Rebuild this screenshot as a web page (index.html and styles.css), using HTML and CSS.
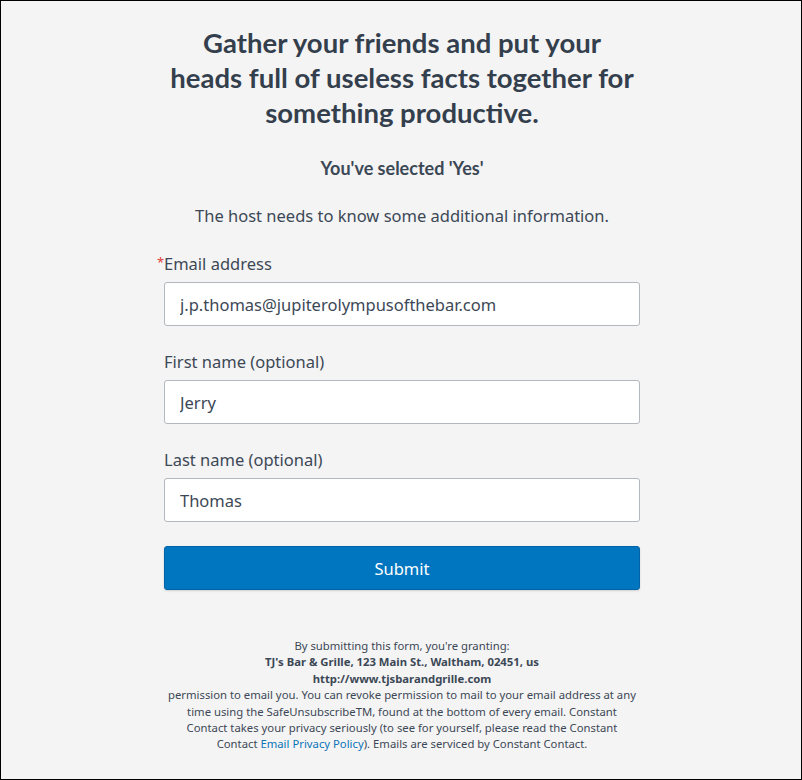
FILE: index.html
```html
<!DOCTYPE html>
<html lang="en">
<head>
    <meta charset="UTF-8">
    <meta name="viewport" content="width=device-width, initial-scale=1.0">
    <title>Event RSVP</title>
    <link rel="stylesheet" href="styles.css">
</head>
<body>
    <div class="page">
        <div class="container">
            <h1>Gather your friends and put your heads full of useless facts together for something productive.</h1>
            <p class="selected">You've selected 'Yes'</p>
            <p class="intro">The host needs to know some additional information.</p>

            <form class="rsvp-form">
                <div class="field">
                    <label for="email"><span class="required">*</span>Email address</label>
                    <input type="text" id="email" value="j.p.thomas@jupiterolympusofthebar.com">
                </div>
                <div class="field">
                    <label for="firstName">First name (optional)</label>
                    <input type="text" id="firstName" value="Jerry">
                </div>
                <div class="field">
                    <label for="lastName">Last name (optional)</label>
                    <input type="text" id="lastName" value="Thomas">
                </div>
                <button type="button" class="submit-btn">Submit</button>
            </form>

            <div class="legal">
                By submitting this form, you're granting:<br>
                <strong>TJ's Bar &amp; Grille, 123 Main St., Waltham, 02451, us</strong><br>
                <strong>http://www.tjsbarandgrille.com</strong><br>
                permission to email you. You can revoke permission to mail to your email address at any time using the SafeUnsubscribeTM, found at the bottom of every email. Constant Contact takes your privacy seriously (to see for yourself, please read the Constant Contact <a href="#">Email Privacy Policy</a>). Emails are serviced by Constant Contact.
            </div>
        </div>
    </div>
</body>
</html>
```

FILE: styles.css
```css
/* General Styles */
html, body {
    margin: 0;
    padding: 0;
}
body {
    font-family: "Noto Sans", "Open Sans", sans-serif;
    background-color: #f4f4f4;
    color: #3c4856;
}
.page {
    box-sizing: border-box;
    height: 780px;
    border: 1px solid #000;
    padding-left: 2px;
    overflow: hidden;
}
.container {
    width: 476px;
    margin: 0 auto;
    padding-top: 24px;
    text-align: center;
}
h1 {
    font-family: Lato, sans-serif;
    font-weight: 700;
    font-size: 27.5px;
    line-height: 35px;
    margin: 0;
    padding: 0 4px;
    color: #343f4d;
}
.selected {
    font-family: Lato, sans-serif;
    font-weight: 700;
    font-size: 18px;
    margin: 26px 0 0;
    line-height: 24px;
}
.intro {
    font-size: 16.5px;
    margin: 24px 0 0;
    line-height: 24px;
}
.rsvp-form {
    text-align: left;
    margin-top: 24px;
}
.field {
    margin-bottom: 24px;
}
.field label {
    display: block;
    position: relative;
    font-size: 16.5px;
    line-height: 24px;
    margin-bottom: 6px;
}
.required {
    position: absolute;
    left: -7px;
    top: -2px;
    color: #e0403a;
    font-size: 13px;
}
.field input {
    box-sizing: border-box;
    width: 100%;
    height: 44px;
    padding: 0 15px;
    border: 1px solid #b3b8bf;
    border-radius: 3px;
    background: #fff;
    font-family: "Noto Sans", "Open Sans", sans-serif;
    font-size: 16.5px;
    color: #3c4856;
}
.submit-btn {
    display: block;
    width: 100%;
    height: 44px;
    margin: 0;
    background-color: #0076c0;
    border: 1px solid #0063a8;
    border-radius: 3px;
    box-shadow: 0 1px 2px rgba(0, 0, 0, 0.15);
    color: #fff;
    font-family: "Noto Sans", "Open Sans", sans-serif;
    font-size: 16.5px;
    cursor: pointer;
}
.legal {
    margin-top: 48px;
    padding: 0 2px;
    font-size: 11.3px;
    line-height: 16.4px;
    color: #3c4856;
}
.legal strong {
    font-weight: 700;
}
.legal a {
    color: #0b74b8;
    text-decoration: none;
}
```
